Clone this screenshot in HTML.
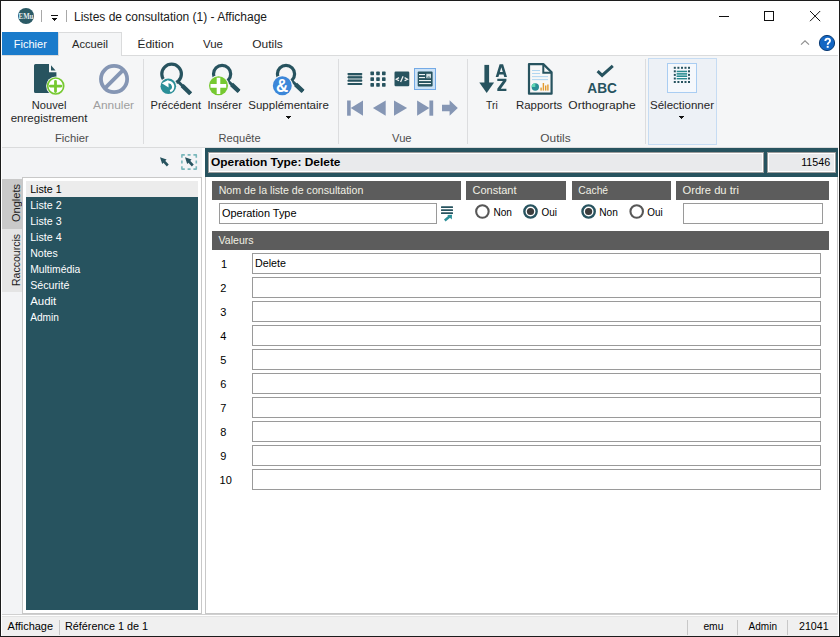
<!DOCTYPE html>
<html><head><meta charset="utf-8"><title>Listes de consultation</title>
<style>
html,body{margin:0;padding:0;width:840px;height:637px;overflow:hidden;background:#fff}
svg{display:block;font-family:"Liberation Sans", sans-serif}
</style></head><body>
<svg width="840" height="637" viewBox="0 0 840 637">
<rect x="0" y="0" width="840" height="637" fill="#ffffff" />
<circle cx="26" cy="16" r="8" fill="#2b5a66"/>
<text x="18.6" y="18.8" font-size="8.5" fill="#e6eef0" font-weight="bold" text-anchor="start" textLength="14.8" lengthAdjust="spacingAndGlyphs" style="font-family:'Liberation Serif', serif" >EMu</text>
<rect x="41" y="10" width="1" height="12" fill="#a8a8a8" />
<rect x="66" y="10" width="1" height="12" fill="#a8a8a8" />
<rect x="51" y="15" width="7" height="1" fill="#111" />
<rect x="52" y="18" width="5" height="1" fill="#111" />
<rect x="53" y="19" width="3" height="1" fill="#111" />
<rect x="54" y="20" width="1" height="1" fill="#222" />
<text x="74" y="21" font-size="12" fill="#1a1a1a" font-weight="normal" text-anchor="start" textLength="193" lengthAdjust="spacingAndGlyphs" >Listes de consultation (1) - Affichage</text>
<rect x="719" y="16" width="10" height="1" fill="#111" />
<rect x="764.5" y="11.5" width="9" height="9" fill="none" stroke="#111" stroke-width="1"/>
<path d="M810 11 L820.2 21.2 M820.2 11 L810 21.2" stroke="#111" stroke-width="1"/>
<rect x="2" y="32" width="56" height="23" fill="#1a7bcb" />
<text x="13.8" y="48" font-size="11.5" fill="#ffffff" font-weight="normal" text-anchor="start" textLength="33" lengthAdjust="spacingAndGlyphs" >Fichier</text>
<rect x="2" y="55" width="836" height="1" fill="#dadbdc" />
<rect x="2" y="56" width="836" height="91" fill="#f5f6f7" />
<rect x="58" y="32" width="64" height="24" fill="#dadbdc" />
<rect x="59" y="33" width="62" height="23" fill="#f5f6f7" />
<text x="72" y="48" font-size="11.5" fill="#262626" font-weight="normal" text-anchor="start" textLength="36" lengthAdjust="spacingAndGlyphs" >Accueil</text>
<text x="137.5" y="48" font-size="11.5" fill="#262626" font-weight="normal" text-anchor="start" textLength="36.5" lengthAdjust="spacingAndGlyphs" >Édition</text>
<text x="203" y="48" font-size="11.5" fill="#262626" font-weight="normal" text-anchor="start" textLength="20" lengthAdjust="spacingAndGlyphs" >Vue</text>
<text x="252.2" y="48" font-size="11.5" fill="#262626" font-weight="normal" text-anchor="start" textLength="30.6" lengthAdjust="spacingAndGlyphs" >Outils</text>
<path d="M801 44.6 L805 40.8 L809 44.6" fill="none" stroke="#8f8f8f" stroke-width="1.15"/>
<circle cx="827" cy="43" r="7.6" fill="#1467c4" stroke="#0c3c75" stroke-width="1"/>
<path d="M825.3 41 Q825.5 38.6 827.7 38.6 Q830 38.6 830 40.7 Q830 41.9 828.7 42.7 Q827.7 43.3 827.7 44.8" fill="none" stroke="#ffffff" stroke-width="1.9"/>
<rect x="826.7" y="45.9" width="2" height="1.9" fill="#ffffff" />
<rect x="2" y="147" width="836" height="1" fill="#dadbdc" />
<rect x="143" y="59" width="1" height="85" fill="#dcdddf" />
<rect x="338" y="59" width="1" height="85" fill="#dcdddf" />
<rect x="467" y="59" width="1" height="85" fill="#dcdddf" />
<rect x="645" y="59" width="1" height="85" fill="#dcdddf" />
<path d="M35.5 64 H49 V72.3 H56.4 V91.5 Q56.4 93 55 93 H35.5 Q34 93 34 91.5 V65.5 Q34 64 35.5 64 Z" fill="#27535f"/>
<path d="M51 65.2 L55.6 70.4 H51 Z" fill="#27535f"/>
<circle cx="55.7" cy="86" r="9.6" fill="#f5f6f7"/>
<circle cx="55.7" cy="86" r="8" fill="#ffffff" stroke="#76c931" stroke-width="1.7"/>
<path d="M55.5 81.3 V91.5 M50.3 86.1 H61" stroke="#76c931" stroke-width="2.8" stroke-linecap="round"/>
<text x="31.8" y="109" font-size="11.5" fill="#262626" font-weight="normal" text-anchor="start" textLength="34.6" lengthAdjust="spacingAndGlyphs" >Nouvel</text>
<text x="10.7" y="122" font-size="11.5" fill="#262626" font-weight="normal" text-anchor="start" textLength="76.8" lengthAdjust="spacingAndGlyphs" >enregistrement</text>
<circle cx="114.05" cy="79.05" r="13.1" fill="none" stroke="#8596b4" stroke-width="3.8"/>
<path d="M104.8 88.3 L123.3 69.8" stroke="#8596b4" stroke-width="3.8"/>
<text x="93" y="109" font-size="11.5" fill="#9e9e9e" font-weight="normal" text-anchor="start" textLength="41" lengthAdjust="spacingAndGlyphs" >Annuler</text>
<text x="55" y="142" font-size="11.5" fill="#4d4d4d" font-weight="normal" text-anchor="start" textLength="33.7" lengthAdjust="spacingAndGlyphs" >Fichier</text>
<circle cx="171.6" cy="74" r="9.8" fill="none" stroke="#27535f" stroke-width="3.2"/>
<path d="M177.5 81 L190.6 93.8" stroke="#27535f" stroke-width="3"/>
<path d="M182.09 85.48 L190.6 93.8" stroke="#27535f" stroke-width="4.4"/>
<circle cx="168.3" cy="86.3" r="9" fill="#f5f6f7"/>
<circle cx="168.3" cy="86.3" r="7.8" fill="#2b8f98"/>
<path d="M161.8 83.3 L168.3 79.9 L168.6 87.6 Z" fill="#ffffff"/>
<path d="M170.1 91.2 A4.75 4.75 0 0 0 167.8 82.05" fill="none" stroke="#ffffff" stroke-width="2.4"/>
<text x="150.5" y="109" font-size="11.5" fill="#262626" font-weight="normal" text-anchor="start" textLength="50.5" lengthAdjust="spacingAndGlyphs" >Précédent</text>
<circle cx="222.1" cy="74" r="8.6" fill="none" stroke="#27535f" stroke-width="3.2"/>
<path d="M227.5 80.5 L239 91.4" stroke="#27535f" stroke-width="3"/>
<path d="M231.53 84.31 L239 91.4" stroke="#27535f" stroke-width="4.4"/>
<circle cx="218.5" cy="85.7" r="10.5" fill="#f5f6f7"/>
<circle cx="218.5" cy="85.7" r="9.5" fill="#76c931"/>
<path d="M218.5 77.8 V94 M210.5 85.9 H226.2" stroke="#ffffff" stroke-width="3.6"/>
<text x="207.4" y="109" font-size="11.5" fill="#262626" font-weight="normal" text-anchor="start" textLength="34.5" lengthAdjust="spacingAndGlyphs" >Insérer</text>
<circle cx="286" cy="74" r="8.6" fill="none" stroke="#27535f" stroke-width="3.2"/>
<path d="M291.5 80.5 L303 91.4" stroke="#27535f" stroke-width="3"/>
<path d="M295.52 84.31 L303 91.4" stroke="#27535f" stroke-width="4.4"/>
<circle cx="282.3" cy="85.7" r="10.5" fill="#f5f6f7"/>
<circle cx="282.3" cy="85.7" r="9.45" fill="#3c87d9"/>
<text x="276" y="92.2" font-size="17.5" fill="#ffffff" font-weight="bold" text-anchor="start" textLength="12.2" lengthAdjust="spacingAndGlyphs" >&amp;</text>
<text x="248.3" y="109" font-size="11.5" fill="#262626" font-weight="normal" text-anchor="start" textLength="80.5" lengthAdjust="spacingAndGlyphs" >Supplémentaire</text>
<rect x="286" y="116" width="5" height="1" fill="#111" />
<rect x="287" y="117" width="3" height="1" fill="#111" />
<rect x="288" y="118" width="1" height="1" fill="#222" />
<text x="218.6" y="142" font-size="11.5" fill="#4d4d4d" font-weight="normal" text-anchor="start" textLength="42" lengthAdjust="spacingAndGlyphs" >Requête</text>
<rect x="348" y="74.5" width="14" height="5.5" fill="#a3b4b8" />
<rect x="347.4" y="73" width="15" height="2" fill="#27535f" rx="1"/>
<rect x="347.4" y="76.3" width="15" height="2" fill="#27535f" rx="1"/>
<rect x="347.4" y="79.7" width="15" height="2" fill="#27535f" rx="1"/>
<rect x="347.4" y="83" width="15" height="2" fill="#27535f" rx="1"/>
<rect x="370.4" y="71.6" width="3.6" height="3.6" fill="#27535f" rx="0.6"/>
<rect x="376.2" y="71.6" width="3.6" height="3.6" fill="#27535f" rx="0.6"/>
<rect x="382.0" y="71.6" width="3.6" height="3.6" fill="#27535f" rx="0.6"/>
<rect x="370.4" y="77.35" width="3.6" height="3.6" fill="#27535f" rx="0.6"/>
<rect x="376.2" y="77.35" width="3.6" height="3.6" fill="#27535f" rx="0.6"/>
<rect x="382.0" y="77.35" width="3.6" height="3.6" fill="#27535f" rx="0.6"/>
<rect x="370.4" y="83.1" width="3.6" height="3.6" fill="#27535f" rx="0.6"/>
<rect x="376.2" y="83.1" width="3.6" height="3.6" fill="#27535f" rx="0.6"/>
<rect x="382.0" y="83.1" width="3.6" height="3.6" fill="#27535f" rx="0.6"/>
<rect x="394.5" y="71.6" width="14.8" height="14.7" fill="#27535f" rx="1.2"/>
<path d="M399 77.6 L396.3 79.2 L399 80.8 M404.6 77.6 L407.5 79.2 L404.6 80.8 M403.1 76.2 L400.6 82" fill="none" stroke="#f0f0f0" stroke-width="1.3"/>
<rect x="414.5" y="68.5" width="21" height="21" fill="#cce2f6" stroke="#74aae6" stroke-width="1"/>
<rect x="417.7" y="71.5" width="14.9" height="15.1" fill="#27535f" rx="1"/>
<rect x="419" y="74" width="6" height="1.1" fill="#eef2f3" />
<rect x="419" y="77" width="6" height="1.1" fill="#eef2f3" />
<rect x="426.3" y="73.8" width="4.7" height="4.4" fill="#d5e0e3" />
<path d="M426.8 77.6 Q428.6 75.6 430.6 77.6 Z" fill="#27535f"/>
<rect x="419" y="80" width="12" height="1.1" fill="#eef2f3" />
<rect x="419" y="83" width="12" height="1.1" fill="#eef2f3" />
<rect x="347.1" y="100.5" width="3.6" height="15.2" fill="#8596b4" />
<path d="M350.7 108.1 L363 100.5 V115.7 Z" fill="#8596b4"/>
<path d="M372.9 108.1 L385.7 100.5 V115.7 Z" fill="#8596b4"/>
<path d="M407.1 108.1 L394 100.5 V115.7 Z" fill="#8596b4"/>
<path d="M429.4 108.1 L417.1 100.5 V115.7 Z" fill="#8596b4"/>
<rect x="429.4" y="100.5" width="3.8" height="15.2" fill="#8596b4" />
<path d="M442 104.7 H449.6 V100.2 L457.8 108 L449.6 115.7 V111.2 H442 Z" fill="#8596b4"/>
<text x="392.1" y="142" font-size="11.5" fill="#4d4d4d" font-weight="normal" text-anchor="start" textLength="19.5" lengthAdjust="spacingAndGlyphs" >Vue</text>
<rect x="484.4" y="64.9" width="4.7" height="18.5" fill="#27535f" />
<path d="M479.3 82.5 H494.1 L486.7 92.9 Z" fill="#27535f"/>
<path d="M495.7 77 L499.6 64.3 H503.1 L507 77 H504.3 L503.5 74.4 H499.2 L498.4 77 Z M499.9 72 H502.8 L501.35 67.2 Z" fill="#27535f" fill-rule="evenodd"/>
<path d="M497.3 78.8 H506.4 V81.1 L500.8 88.7 H506.4 V91 H497.3 V88.7 L502.9 81.1 H497.3 Z" fill="#27535f"/>
<text x="486" y="109" font-size="11.5" fill="#262626" font-weight="normal" text-anchor="start" textLength="11.7" lengthAdjust="spacingAndGlyphs" >Tri</text>
<path d="M529 64.1 H543.3 L551.6 72.2 V93.7 H529 Z" fill="#f7f7f7" stroke="#27535f" stroke-width="2.2" stroke-linejoin="round"/>
<path d="M543.3 64.1 V72.8 H551.6" fill="none" stroke="#27535f" stroke-width="2"/>
<rect x="532" y="70" width="8" height="0.9" fill="#a9d2ef" />
<rect x="532" y="73" width="8" height="0.9" fill="#a9d2ef" />
<rect x="532" y="76.2" width="16" height="0.9" fill="#a9d2ef" />
<rect x="532" y="79.2" width="16" height="0.9" fill="#a9d2ef" />
<circle cx="535.3" cy="87" r="3.7" fill="#2a8f95"/>
<path d="M535.3 87 L535.3 83.3 A3.7 3.7 0 0 0 531.6 87 Z" fill="#5fd6b4"/>
<rect x="540.4" y="87.6" width="1.4" height="3" fill="#e39a2e" />
<rect x="542.7" y="83" width="1.4" height="7.6" fill="#e39a2e" />
<rect x="545" y="85.5" width="1.4" height="5.1" fill="#e39a2e" />
<rect x="547.2" y="84.5" width="1.4" height="6.1" fill="#e39a2e" />
<text x="516" y="109" font-size="11.5" fill="#262626" font-weight="normal" text-anchor="start" textLength="46.3" lengthAdjust="spacingAndGlyphs" >Rapports</text>
<path d="M597.6 71.1 L602.1 75.4 L612.8 65.8" fill="none" stroke="#27535f" stroke-width="3"/>
<text x="587.3" y="92.9" font-size="15.5" fill="#27535f" font-weight="bold" text-anchor="start" textLength="29.6" lengthAdjust="spacingAndGlyphs" >ABC</text>
<text x="568.3" y="109" font-size="11.5" fill="#262626" font-weight="normal" text-anchor="start" textLength="67.4" lengthAdjust="spacingAndGlyphs" >Orthographe</text>
<text x="540.3" y="142" font-size="11.5" fill="#4d4d4d" font-weight="normal" text-anchor="start" textLength="30.4" lengthAdjust="spacingAndGlyphs" >Outils</text>
<rect x="648.5" y="58.5" width="68" height="86" fill="#edf1f6" stroke="#c6dcf3" stroke-width="1"/>
<rect x="667.5" y="63.5" width="29" height="29" fill="#f5f8fc" stroke="#a9cdf2" stroke-width="1"/>
<rect x="673.8" y="66.8" width="2" height="2" fill="#27535f" />
<rect x="673.8" y="81" width="2" height="2" fill="#27535f" />
<rect x="677.4" y="66.8" width="2" height="2" fill="#27535f" />
<rect x="677.4" y="81" width="2" height="2" fill="#27535f" />
<rect x="681" y="66.8" width="2" height="2" fill="#27535f" />
<rect x="681" y="81" width="2" height="2" fill="#27535f" />
<rect x="684.5" y="66.8" width="2" height="2" fill="#27535f" />
<rect x="684.5" y="81" width="2" height="2" fill="#27535f" />
<rect x="688" y="66.8" width="2" height="2" fill="#27535f" />
<rect x="688" y="81" width="2" height="2" fill="#27535f" />
<rect x="673.8" y="70.3" width="2" height="2" fill="#27535f" />
<rect x="688" y="70.3" width="2" height="2" fill="#27535f" />
<rect x="673.8" y="73.9" width="2" height="2" fill="#27535f" />
<rect x="688" y="73.9" width="2" height="2" fill="#27535f" />
<rect x="673.8" y="77.5" width="2" height="2" fill="#27535f" />
<rect x="688" y="77.5" width="2" height="2" fill="#27535f" />
<rect x="676.7" y="73.2" width="10.4" height="3.8" fill="#86c0c3" />
<rect x="676.7" y="70.7" width="10.4" height="1.5" fill="#2a8a90" />
<rect x="676.7" y="73.2" width="10.4" height="1.1" fill="#2a8a90" />
<rect x="676.7" y="75.9" width="10.4" height="1.1" fill="#2a8a90" />
<rect x="676.7" y="78" width="10.4" height="1.4" fill="#2a8a90" />
<text x="650" y="109" font-size="11.5" fill="#262626" font-weight="normal" text-anchor="start" textLength="64" lengthAdjust="spacingAndGlyphs" >Sélectionner</text>
<rect x="679" y="116" width="5" height="1" fill="#111" />
<rect x="680" y="117" width="3" height="1" fill="#111" />
<rect x="681" y="118" width="1" height="1" fill="#222" />
<rect x="2" y="148" width="200" height="466" fill="#f3f4f6" />
<rect x="202" y="148" width="3" height="466" fill="#ffffff" />
<path d="M160 157.3 L166.6 159.5 L164.4 161.70000000000002 L162.2 163.9 Z" fill="#27535f"/>
<path d="M163 160.3 L167.8 165.5" stroke="#27535f" stroke-width="2.6"/>
<path d="M181.9 157.8 V154.9 H184.8 M187.6 154.9 H190.6 M193.4 154.9 H196.3 V157.8 M196.3 160.5 V163.5 M196.3 166.2 V169.1 H193.4 M190.6 169.1 H187.6 M184.8 169.1 H181.9 V166.2 M181.9 163.5 V160.5" fill="none" stroke="#79b7bb" stroke-width="1.6" stroke-linejoin="round"/>
<path d="M185 157.3 L191.6 159.5 L189.4 161.70000000000002 L187.2 163.9 Z" fill="#27535f"/>
<path d="M188 160.3 L192.8 165.5" stroke="#27535f" stroke-width="2.6"/>
<rect x="2" y="179" width="20" height="50" fill="#c9c9c9" />
<rect x="2" y="229" width="20" height="63" fill="#e4e4e4" />
<text x="0" y="0" font-size="11.5" fill="#1a1a1a" font-weight="normal" text-anchor="start" textLength="38" lengthAdjust="spacingAndGlyphs" transform="translate(19.6 222) rotate(-90)">Onglets</text>
<text x="0" y="0" font-size="11.5" fill="#1a1a1a" font-weight="normal" text-anchor="start" textLength="52" lengthAdjust="spacingAndGlyphs" transform="translate(19.6 286) rotate(-90)">Raccourcis</text>
<rect x="22" y="177" width="180" height="437" fill="#c8c8c8" />
<rect x="23" y="178" width="178" height="435" fill="#ffffff" />
<rect x="26" y="181" width="172" height="16" fill="#ececec" />
<rect x="26" y="197" width="172" height="413" fill="#27535f" />
<text x="30.2" y="193" font-size="11" fill="#000" font-weight="normal" text-anchor="start" textLength="31.4" lengthAdjust="spacingAndGlyphs" >Liste 1</text>
<text x="30.2" y="209" font-size="11" fill="#ffffff" font-weight="normal" text-anchor="start" textLength="31.4" lengthAdjust="spacingAndGlyphs" >Liste 2</text>
<text x="30.2" y="225" font-size="11" fill="#ffffff" font-weight="normal" text-anchor="start" textLength="31.4" lengthAdjust="spacingAndGlyphs" >Liste 3</text>
<text x="30.2" y="241" font-size="11" fill="#ffffff" font-weight="normal" text-anchor="start" textLength="31.4" lengthAdjust="spacingAndGlyphs" >Liste 4</text>
<text x="30.2" y="257" font-size="11" fill="#ffffff" font-weight="normal" text-anchor="start" textLength="27.5" lengthAdjust="spacingAndGlyphs" >Notes</text>
<text x="30.2" y="273" font-size="11" fill="#ffffff" font-weight="normal" text-anchor="start" textLength="50" lengthAdjust="spacingAndGlyphs" >Multimédia</text>
<text x="30.2" y="289" font-size="11" fill="#ffffff" font-weight="normal" text-anchor="start" textLength="39.2" lengthAdjust="spacingAndGlyphs" >Sécurité</text>
<text x="30.2" y="305" font-size="11" fill="#ffffff" font-weight="normal" text-anchor="start" textLength="26" lengthAdjust="spacingAndGlyphs" >Audit</text>
<text x="30.2" y="321" font-size="11" fill="#ffffff" font-weight="normal" text-anchor="start" textLength="28.7" lengthAdjust="spacingAndGlyphs" >Admin</text>
<rect x="205" y="177" width="633" height="437" fill="#c8c8c8" />
<rect x="206" y="177" width="631" height="436" fill="#ffffff" />
<rect x="205" y="148" width="633" height="29" fill="#27535f" />
<rect x="208" y="152" width="556" height="21" fill="#9c9c9c" />
<rect x="209" y="153" width="554" height="19" fill="#ffffff" />
<rect x="210" y="154" width="552" height="17" fill="#e9eaec" />
<rect x="767" y="152" width="69" height="21" fill="#9c9c9c" />
<rect x="768" y="153" width="67" height="19" fill="#ffffff" />
<rect x="769" y="154" width="65" height="17" fill="#e9eaec" />
<text x="211" y="166" font-size="11.5" fill="#000" font-weight="bold" text-anchor="start" textLength="129.5" lengthAdjust="spacingAndGlyphs" >Operation Type: Delete</text>
<text x="830.2" y="166" font-size="11" fill="#000" font-weight="normal" text-anchor="end" textLength="29" lengthAdjust="spacingAndGlyphs" >11546</text>
<rect x="212" y="181" width="249" height="19" fill="#5c5c5c" />
<text x="218.7" y="194" font-size="11" fill="#f1f0e4" font-weight="normal" text-anchor="start" textLength="144.6" lengthAdjust="spacingAndGlyphs" >Nom de la liste de consultation</text>
<rect x="466" y="181" width="100" height="19" fill="#5c5c5c" />
<text x="472.5" y="194" font-size="11" fill="#f1f0e4" font-weight="normal" text-anchor="start" textLength="44" lengthAdjust="spacingAndGlyphs" >Constant</text>
<rect x="572" y="181" width="99" height="19" fill="#5c5c5c" />
<text x="578.3" y="194" font-size="11" fill="#f1f0e4" font-weight="normal" text-anchor="start" textLength="29.8" lengthAdjust="spacingAndGlyphs" >Caché</text>
<rect x="676" y="181" width="153" height="19" fill="#5c5c5c" />
<text x="682.5" y="194" font-size="11" fill="#f1f0e4" font-weight="normal" text-anchor="start" textLength="56.5" lengthAdjust="spacingAndGlyphs" >Ordre du tri</text>
<rect x="219" y="203" width="218" height="21" fill="#9a9a9a" />
<rect x="220" y="204" width="216" height="19" fill="#ffffff" />
<text x="222" y="217" font-size="11" fill="#000" font-weight="normal" text-anchor="start" textLength="74.5" lengthAdjust="spacingAndGlyphs" >Operation Type</text>
<rect x="441" y="206.3" width="12" height="1.7" fill="#27535f" rx="0.5"/>
<rect x="441" y="209.3" width="12" height="1.7" fill="#27535f" rx="0.5"/>
<rect x="441" y="212.3" width="12" height="1.7" fill="#27535f" rx="0.5"/>
<path d="M444.8 220.4 L449.5 216.6" stroke="#2b8f98" stroke-width="2.6"/>
<path d="M447.2 215 L452 214.8 L451.8 219.5 Z" fill="#2b8f98"/>
<rect x="683" y="203" width="140" height="21" fill="#9a9a9a" />
<rect x="684" y="204" width="138" height="19" fill="#ffffff" />
<circle cx="482.4" cy="211.5" r="6.25" fill="#ffffff" stroke="#575757" stroke-width="2.1"/>
<text x="493.4" y="216" font-size="11" fill="#000" font-weight="normal" text-anchor="start" textLength="18.6" lengthAdjust="spacingAndGlyphs" >Non</text>
<circle cx="530.5" cy="211.5" r="6.15" fill="#ffffff" stroke="#27535f" stroke-width="2.4"/>
<circle cx="530.5" cy="211.5" r="3.6" fill="#3c3c3c"/>
<text x="541.6" y="216" font-size="11" fill="#000" font-weight="normal" text-anchor="start" textLength="15.4" lengthAdjust="spacingAndGlyphs" >Oui</text>
<circle cx="588.6" cy="211.5" r="6.15" fill="#ffffff" stroke="#27535f" stroke-width="2.4"/>
<circle cx="588.6" cy="211.5" r="3.6" fill="#3c3c3c"/>
<text x="599.3" y="216" font-size="11" fill="#000" font-weight="normal" text-anchor="start" textLength="18.6" lengthAdjust="spacingAndGlyphs" >Non</text>
<circle cx="636.7" cy="211.5" r="6.25" fill="#ffffff" stroke="#575757" stroke-width="2.1"/>
<text x="647.3" y="216" font-size="11" fill="#000" font-weight="normal" text-anchor="start" textLength="15.4" lengthAdjust="spacingAndGlyphs" >Oui</text>
<rect x="212" y="231" width="617" height="19" fill="#5c5c5c" />
<text x="218.6" y="244" font-size="11" fill="#f1f0e4" font-weight="normal" text-anchor="start" textLength="35" lengthAdjust="spacingAndGlyphs" >Valeurs</text>
<rect x="252" y="253" width="569" height="21" fill="#9a9a9a" />
<rect x="253" y="254" width="567" height="19" fill="#ffffff" />
<text x="221" y="267.5" font-size="11" fill="#000" font-weight="normal" text-anchor="start" >1</text>
<rect x="252" y="277" width="569" height="21" fill="#9a9a9a" />
<rect x="253" y="278" width="567" height="19" fill="#ffffff" />
<text x="220.2" y="291.5" font-size="11" fill="#000" font-weight="normal" text-anchor="start" >2</text>
<rect x="252" y="301" width="569" height="21" fill="#9a9a9a" />
<rect x="253" y="302" width="567" height="19" fill="#ffffff" />
<text x="220.2" y="315.5" font-size="11" fill="#000" font-weight="normal" text-anchor="start" >3</text>
<rect x="252" y="325" width="569" height="21" fill="#9a9a9a" />
<rect x="253" y="326" width="567" height="19" fill="#ffffff" />
<text x="220.2" y="339.5" font-size="11" fill="#000" font-weight="normal" text-anchor="start" >4</text>
<rect x="252" y="349" width="569" height="21" fill="#9a9a9a" />
<rect x="253" y="350" width="567" height="19" fill="#ffffff" />
<text x="220.2" y="363.5" font-size="11" fill="#000" font-weight="normal" text-anchor="start" >5</text>
<rect x="252" y="373" width="569" height="21" fill="#9a9a9a" />
<rect x="253" y="374" width="567" height="19" fill="#ffffff" />
<text x="220.2" y="387.5" font-size="11" fill="#000" font-weight="normal" text-anchor="start" >6</text>
<rect x="252" y="397" width="569" height="21" fill="#9a9a9a" />
<rect x="253" y="398" width="567" height="19" fill="#ffffff" />
<text x="220.2" y="411.5" font-size="11" fill="#000" font-weight="normal" text-anchor="start" >7</text>
<rect x="252" y="421" width="569" height="21" fill="#9a9a9a" />
<rect x="253" y="422" width="567" height="19" fill="#ffffff" />
<text x="220.2" y="435.5" font-size="11" fill="#000" font-weight="normal" text-anchor="start" >8</text>
<rect x="252" y="445" width="569" height="21" fill="#9a9a9a" />
<rect x="253" y="446" width="567" height="19" fill="#ffffff" />
<text x="220.2" y="459.5" font-size="11" fill="#000" font-weight="normal" text-anchor="start" >9</text>
<rect x="252" y="469" width="569" height="21" fill="#9a9a9a" />
<rect x="253" y="470" width="567" height="19" fill="#ffffff" />
<text x="219.6" y="483.5" font-size="11" fill="#000" font-weight="normal" text-anchor="start" >10</text>
<text x="255" y="267" font-size="11" fill="#000" font-weight="normal" text-anchor="start" textLength="31" lengthAdjust="spacingAndGlyphs" >Delete</text>
<rect x="2" y="614" width="836" height="1" fill="#d0d0d0" />
<rect x="2" y="615" width="836" height="1" fill="#ffffff" />
<rect x="2" y="616" width="836" height="1" fill="#e3e3e3" />
<rect x="2" y="617" width="836" height="19" fill="#f0f0f0" />
<text x="7.6" y="630" font-size="11" fill="#000" font-weight="normal" text-anchor="start" textLength="45.4" lengthAdjust="spacingAndGlyphs" >Affichage</text>
<rect x="59" y="620" width="1" height="15" fill="#c8c8c8" />
<rect x="687" y="620" width="1" height="15" fill="#c8c8c8" />
<rect x="737" y="620" width="1" height="15" fill="#c8c8c8" />
<rect x="787" y="620" width="1" height="15" fill="#c8c8c8" />
<text x="65" y="630" font-size="11" fill="#000" font-weight="normal" text-anchor="start" textLength="83" lengthAdjust="spacingAndGlyphs" >Référence 1 de 1</text>
<text x="703.4" y="630" font-size="11" fill="#000" font-weight="normal" text-anchor="start" textLength="20" lengthAdjust="spacingAndGlyphs" >emu</text>
<text x="748.6" y="630" font-size="11" fill="#000" font-weight="normal" text-anchor="start" textLength="28.4" lengthAdjust="spacingAndGlyphs" >Admin</text>
<text x="799" y="630" font-size="11" fill="#000" font-weight="normal" text-anchor="start" textLength="29.6" lengthAdjust="spacingAndGlyphs" >21041</text>
<rect x="0" y="0" width="840" height="1" fill="#1c1c1c" />
<rect x="0" y="636" width="840" height="1" fill="#1c1c1c" />
<rect x="0" y="0" width="1" height="637" fill="#1c1c1c" />
<rect x="839" y="0" width="1" height="637" fill="#1c1c1c" />
</svg>
</body></html>
